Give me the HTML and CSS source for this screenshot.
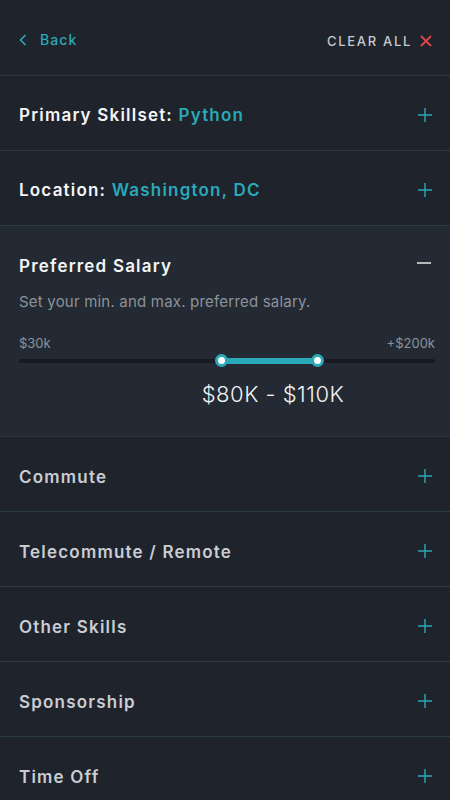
FILE: index.html
```html
<!DOCTYPE html>
<html>
<head>
<meta charset="utf-8">
<link rel="stylesheet" href="styles.css">
</head>
<body>
<div class="app">
  <header class="topbar">
    <a class="back">
      <svg class="chev" width="8" height="12" viewBox="0 0 8 12"><path d="M6.5 1 L1.5 6 L6.5 11" fill="none" stroke="#2aa9b8" stroke-width="1.6"/></svg>
      <span>Back</span>
    </a>
    <a class="clear">
      <span>CLEAR ALL</span>
      <svg width="12" height="12" viewBox="0 0 12 12"><path d="M1 1 L11 11 M11 1 L1 11" stroke="#e0474c" stroke-width="1.8"/></svg>
    </a>
  </header>

  <div class="row">
    <div class="label strong">Primary Skillset: <span class="val">Python</span></div>
    <svg class="plus" width="14" height="14" viewBox="0 0 14 14"><path d="M7 0 V14 M0 7 H14" stroke="#2aa9b8" stroke-width="1.4"/></svg>
  </div>
  <div class="row">
    <div class="label strong">Location: <span class="val">Washington, DC</span></div>
    <svg class="plus" width="14" height="14" viewBox="0 0 14 14"><path d="M7 0 V14 M0 7 H14" stroke="#2aa9b8" stroke-width="1.4"/></svg>
  </div>

  <section class="salary">
    <div class="salary-head">
      <div class="label strong">Preferred Salary</div>
      <svg class="minus" width="14" height="2" viewBox="0 0 14 2"><path d="M0 1 H14" stroke="#e6e8ea" stroke-width="1.5"/></svg>
    </div>
    <p class="desc">Set your min. and max. preferred salary.</p>
    <div class="range-labels"><span>$30k</span><span>+$200k</span></div>
    <div class="track">
      <div class="fill" style="left:48.8%; width:23.1%"></div>
      <div class="knob" style="left:48.8%"></div>
      <div class="knob" style="left:71.9%"></div>
    </div>
    <div class="amount">$80K - $110K</div>
  </section>

  <div class="row">
    <div class="label">Commute</div>
    <svg class="plus" width="14" height="14" viewBox="0 0 14 14"><path d="M7 0 V14 M0 7 H14" stroke="#2aa9b8" stroke-width="1.4"/></svg>
  </div>
  <div class="row">
    <div class="label">Telecommute / Remote</div>
    <svg class="plus" width="14" height="14" viewBox="0 0 14 14"><path d="M7 0 V14 M0 7 H14" stroke="#2aa9b8" stroke-width="1.4"/></svg>
  </div>
  <div class="row">
    <div class="label">Other Skills</div>
    <svg class="plus" width="14" height="14" viewBox="0 0 14 14"><path d="M7 0 V14 M0 7 H14" stroke="#2aa9b8" stroke-width="1.4"/></svg>
  </div>
  <div class="row">
    <div class="label">Sponsorship</div>
    <svg class="plus" width="14" height="14" viewBox="0 0 14 14"><path d="M7 0 V14 M0 7 H14" stroke="#2aa9b8" stroke-width="1.4"/></svg>
  </div>
  <div class="row">
    <div class="label">Time Off</div>
    <svg class="plus" width="14" height="14" viewBox="0 0 14 14"><path d="M7 0 V14 M0 7 H14" stroke="#2aa9b8" stroke-width="1.4"/></svg>
  </div>
</div>
</body>
</html>
```

FILE: styles.css
```css
html, body {
  margin: 0;
  padding: 0;
  background: #1f232c;
}
body {
  font-family: "Inter", "Open Sans", sans-serif;
  color: #f2f3f4;
  height: 800px;
  overflow: hidden;
}
.app {
  width: 450px;
}
.topbar {
  height: 75px;
  display: flex;
  align-items: center;
  justify-content: space-between;
  padding: 0 18px 0 19px;
  border-bottom: 1px solid #2b3c44;
}
.back {
  display: flex;
  align-items: center;
  gap: 13px;
  color: #2aa9b8;
  font-size: 14px;
  font-weight: 500;
  letter-spacing: 1.1px;
  margin-top: 4px;
}
.clear {
  display: flex;
  align-items: center;
  gap: 8px;
  color: #c6cad0;
  font-size: 13px;
  font-weight: 500;
  letter-spacing: 1.7px;
  margin-top: 6px;
}
.row {
  box-sizing: border-box;
  height: 75px;
  display: flex;
  align-items: center;
  justify-content: space-between;
  padding: 4px 18px 0 19px;
  border-bottom: 1px solid #2b3c44;
}
.label {
  font-size: 17px;
  font-weight: 600;
  letter-spacing: 1.2px;
  color: #c9cdd3;
  padding-top: 2px;
}
.label.strong {
  color: #f4f5f6;
  padding-top: 0;
}
.val {
  color: #2aa9b8;
}
.plus {
  display: block;
}
.salary {
  background: #232a33;
  padding: 30px 15px 28px 19px;
  border-bottom: 1px solid #2a353d;
  height: 152px;
}
.salary-head {
  display: flex;
  align-items: center;
  justify-content: space-between;
  padding-right: 4px;
}
.minus { display: block; margin-top: -6px; }
.desc {
  margin: 16px 0 0;
  font-size: 15px;
  color: #8c9299;
  letter-spacing: 0.2px;
}
.range-labels {
  display: flex;
  justify-content: space-between;
  margin-top: 24px;
  font-size: 13px;
  color: #8c9299;
}
.track {
  position: relative;
  height: 4px;
  background: #181c22;
  margin-top: 8px;
  border-radius: 2px;
}
.fill {
  position: absolute;
  top: -1px;
  height: 6px;
  background: #2aa9b8;
}
.knob {
  position: absolute;
  top: 2px;
  width: 7px;
  height: 7px;
  margin: -7px 0 0 -7px;
  border: 3.5px solid #2aa9b8;
  background: #ffffff;
  border-radius: 50%;
}
.amount {
  margin-top: 18px;
  text-align: center;
  padding-left: 92px;
  font-size: 22px;
  font-weight: 300;
  color: #f2f3f4;
  letter-spacing: 0.5px;
}
```
